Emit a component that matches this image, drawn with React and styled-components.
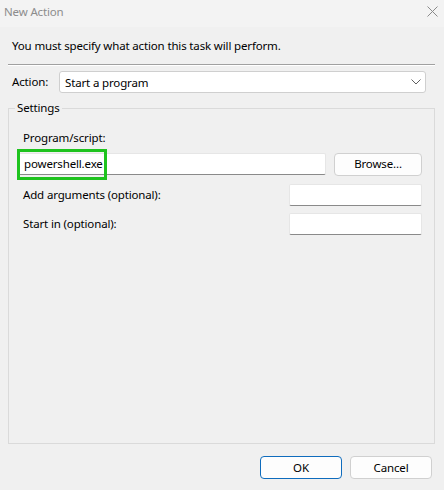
import React from 'react';
import styled, { createGlobalStyle } from 'styled-components';

const FONT = '"Noto Sans", "Segoe UI", sans-serif';

const Global = createGlobalStyle`
    html, body {
        margin: 0;
        padding: 0;
        background: #f0f0f0;
    }
    * {
        box-sizing: border-box;
    }
`

const Window = styled.div`
    width: 444px;
    height: 490px;
    display: flex;
    flex-direction: column;
    background: #f0f0f0;
    font-family: ${FONT};
    font-size: 11.5px;
    letter-spacing: -0.15px;
    color: #000;
    overflow: hidden;
`

const TitleBar = styled.div`
    height: 27px;
    display: flex;
    align-items: center;
    justify-content: space-between;
    padding: 0 6px 4px 4px;
    background: #f3f3f3;
`

const Title = styled.span`
    color: #8c8c8c;
    line-height: 16px;
`

const Content = styled.div`
    flex: 1;
    display: flex;
    flex-direction: column;
    padding: 0 9px 0 8px;
`

const Intro = styled.div`
    margin-top: 11px;
    padding-left: 4px;
    line-height: 16px;
`

const Divider = styled.div`
    margin-top: 10px;
    height: 2px;
    border-top: 1px solid #a0a0a0;
    border-bottom: 1px solid #ffffff;
`

const ActionRow = styled.div`
    margin-top: 5px;
    display: flex;
    align-items: center;
    height: 22px;
`

const ActionLabel = styled.label`
    width: 51px;
    padding-left: 4px;
    line-height: 16px;
`

const Combo = styled.div`
    flex: 1;
    margin-right: 9px;
    height: 22px;
    display: flex;
    align-items: center;
    justify-content: space-between;
    padding: 0 4px 0 5px;
    background: #ffffff;
    border: 1px solid #cfcfcf;
    border-radius: 3px;
`

const Group = styled.fieldset`
    margin: 7px 0 0;
    height: 344px;
    padding: 14px 12px 0 9px;
    border: 1px solid #dadada;
    border-radius: 0;
    min-width: 0;
`

const Legend = styled.legend`
    padding: 0 2px;
    margin-left: -3px;
    line-height: 16px;
`

const FieldLabel = styled.div`
    padding-left: 5px;
    line-height: 16px;
`

const Row = styled.div`
    display: flex;
    align-items: center;
    justify-content: space-between;
    margin-top: ${props => props.gap || 0}px;
    height: ${props => props.height || 22}px;
`

const InputWrap = styled.div`
    position: relative;
    width: ${props => props.width}px;
    height: 100%;
`

const TextBox = styled.input`
    width: 100%;
    height: 100%;
    margin: 0;
    padding: 0 4px 1px 5px;
    font-family: ${FONT};
    font-size: 11.5px;
    letter-spacing: -0.15px;
    color: #000;
    background: #ffffff;
    border: 1px solid #e6e6e6;
    border-bottom-color: #8a8a8a;
    border-radius: 2px;
    outline: none;
`

/* green callout drawn around the program name */
const Highlight = styled.div`
    position: absolute;
    left: -1px;
    top: -4px;
    width: 90px;
    height: 31px;
    border: 3px solid #1ec31e;
    pointer-events: none;
`

const Button = styled.button`
    width: ${props => props.width || 82}px;
    height: 23px;
    margin: 0;
    padding: 0 0 1px;
    font-family: ${FONT};
    font-size: 11.5px;
    letter-spacing: -0.15px;
    color: #000;
    background: #fdfdfd;
    border: 1px solid ${props => props.primary ? '#0f6cbd' : '#d0d0d0'};
    border-radius: 4px;
    cursor: default;
`

const Footer = styled.div`
    margin-top: 12px;
    padding-right: 3px;
    display: flex;
    justify-content: flex-end;
    gap: 8px;
`

const CloseIcon = () => (
    <svg width="11" height="11" viewBox="0 0 11 11">
        <path d="M0.5 0.5 L10.5 10.5 M10.5 0.5 L0.5 10.5" stroke="#8a8a8a" strokeWidth="1" fill="none" />
    </svg>
)

const Chevron = () => (
    <svg width="10" height="6" viewBox="0 0 10 6">
        <path d="M0.5 0.5 L5 5 L9.5 0.5" stroke="#606060" strokeWidth="1" fill="none" />
    </svg>
)

export default function App() {
    return (
        <>
            <Global />
            <Window>
                <TitleBar>
                    <Title>New Action</Title>
                    <CloseIcon />
                </TitleBar>
                <Content>
                    <Intro>You must specify what action this task will perform.</Intro>
                    <Divider />
                    <ActionRow>
                        <ActionLabel>Action:</ActionLabel>
                        <Combo>
                            <span>Start a program</span>
                            <Chevron />
                        </Combo>
                    </ActionRow>
                    <Group>
                        <Legend>Settings</Legend>
                        <FieldLabel>Program/script:</FieldLabel>
                        <Row gap={7} height={22}>
                            <InputWrap width={308}>
                                <TextBox defaultValue="powershell.exe" />
                                <Highlight />
                            </InputWrap>
                            <Button width={88}>Browse...</Button>
                        </Row>
                        <Row gap={9} height={22}>
                            <FieldLabel>Add arguments (optional):</FieldLabel>
                            <InputWrap width={133}>
                                <TextBox />
                            </InputWrap>
                        </Row>
                        <Row gap={7} height={22}>
                            <FieldLabel>Start in (optional):</FieldLabel>
                            <InputWrap width={133}>
                                <TextBox />
                            </InputWrap>
                        </Row>
                    </Group>
                    <Footer>
                        <Button primary>OK</Button>
                        <Button>Cancel</Button>
                    </Footer>
                </Content>
            </Window>
        </>
    );
}
